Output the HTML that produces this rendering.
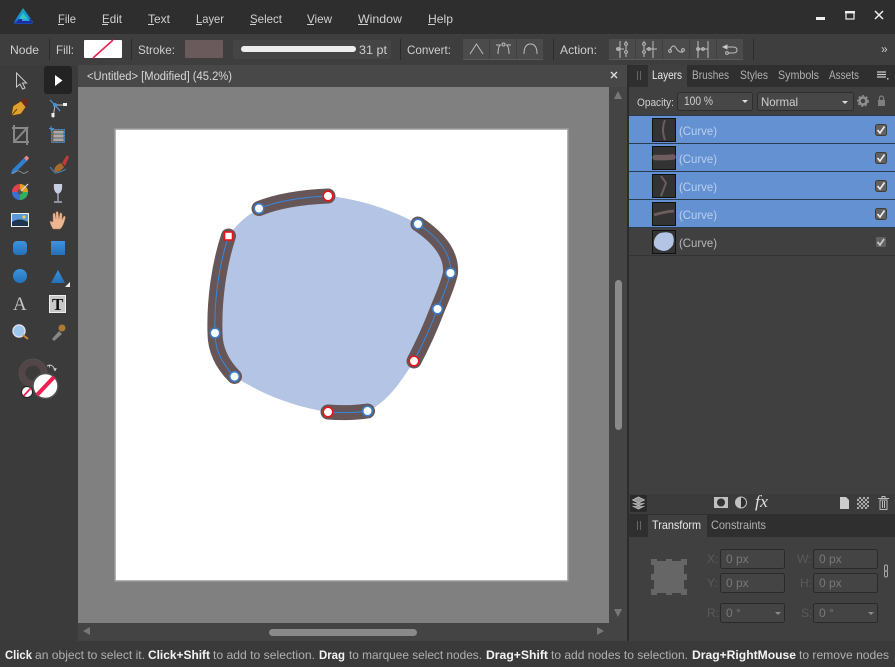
<!DOCTYPE html>
<html><head><meta charset="utf-8"><title>Affinity Designer</title>
<style>
html,body{margin:0;padding:0;background:#3b3b3b;width:895px;height:667px;overflow:hidden}
svg{display:block;font-family:"Liberation Sans",sans-serif;font-size:12px}
.m{fill:#d0d0d0}.l{fill:#cfcfcf}.d{fill:#5a5a5a}.i{fill:#787878}.b{fill:#f4f4f4;font-weight:bold}.g{fill:#b0b0b0}
.ic{fill:none;stroke:#bdbdbd;stroke-width:1}
</style></head><body>
<svg width="895" height="667" viewBox="0 0 895 667" xmlns="http://www.w3.org/2000/svg">
<defs>
<linearGradient id="bl" x1="0" y1="0" x2="0" y2="1"><stop offset="0" stop-color="#3d94de"/><stop offset="1" stop-color="#2470b8"/></linearGradient>
<linearGradient id="lg" x1="0" y1="0" x2="0" y2="1"><stop offset="0" stop-color="#16a8a8"/><stop offset=".6" stop-color="#1c8de0"/><stop offset="1" stop-color="#1c3fb0"/></linearGradient>
</defs>
<rect width="895" height="667" fill="#3b3b3b"/>
<!-- title bar -->
<rect width="895" height="34" fill="#2e2e2e"/>
<rect y="34" width="895" height="31" fill="#3e3e3e"/>
<path d="M23 8L33 22Q33 24 31 24H15Q13 24 14 22Z" fill="url(#lg)"/>
<path d="M23 13L28 19H19Z" fill="#2fd8b0" opacity=".8"/><path d="M19 19H31L32 23H16Z" fill="#1b2f9a"/><path d="M22 19H29L30 21H22Z" fill="#2a9ee8"/>
<g class="m">
<text x="58" y="23" textLength="18" lengthAdjust="spacingAndGlyphs">File</text><rect x="58" y="24" width="6" height="1"/>
<text x="102" y="23" textLength="20" lengthAdjust="spacingAndGlyphs">Edit</text><rect x="102" y="24" width="6" height="1"/>
<text x="148" y="23" textLength="22" lengthAdjust="spacingAndGlyphs">Text</text><rect x="148" y="24" width="6" height="1"/>
<text x="196" y="23" textLength="28" lengthAdjust="spacingAndGlyphs">Layer</text><rect x="196" y="24" width="6" height="1"/>
<text x="250" y="23" textLength="32" lengthAdjust="spacingAndGlyphs">Select</text><rect x="250" y="24" width="6" height="1"/>
<text x="307" y="23" textLength="25" lengthAdjust="spacingAndGlyphs">View</text><rect x="307" y="24" width="7" height="1"/>
<text x="358" y="23" textLength="44" lengthAdjust="spacingAndGlyphs">Window</text><rect x="358" y="24" width="10" height="1"/>
<text x="428" y="23" textLength="25" lengthAdjust="spacingAndGlyphs">Help</text><rect x="428" y="24" width="7" height="1"/>
</g>
<rect x="816" y="17" width="9" height="3" fill="#f0f0f0"/>
<rect x="846" y="12" width="8" height="7" fill="none" stroke="#eee" stroke-width="1.2"/><rect x="845" y="11" width="10" height="2.4" fill="#eee"/>
<path d="M875 11l8 8M883 11l-8 8" stroke="#eee" stroke-width="1.5"/>
<!-- toolbar -->
<g class="l">
<text x="10" y="54" textLength="29" lengthAdjust="spacingAndGlyphs">Node</text>
<text x="56" y="54" textLength="18" lengthAdjust="spacingAndGlyphs">Fill:</text>
<text x="138" y="54" textLength="37" lengthAdjust="spacingAndGlyphs">Stroke:</text>
<text x="407" y="54" textLength="44" lengthAdjust="spacingAndGlyphs">Convert:</text>
<text x="560" y="54" textLength="37" lengthAdjust="spacingAndGlyphs">Action:</text>
</g>
<g fill="#2b2b2b"><rect x="49" y="39" width="1" height="21"/><rect x="131" y="39" width="1" height="21"/><rect x="400" y="39" width="1" height="21"/><rect x="553" y="39" width="1" height="21"/><rect x="753" y="39" width="1" height="21"/></g>
<rect x="84" y="40" width="38" height="18" rx="1" fill="#fff"/><path d="M93 58L113 40" stroke="#f0204f" stroke-width="1.6"/>
<rect x="185" y="40" width="38" height="18" rx="1" fill="#6b5a5b"/>
<rect x="233" y="40" width="158" height="19" rx="2" fill="#454545"/>
<rect x="241" y="46" width="115" height="6" rx="3" fill="#eee"/>
<text x="359" y="54" class="l" textLength="28" lengthAdjust="spacingAndGlyphs">31 pt</text>
<!-- convert buttons -->
<g fill="#4b4b4b"><rect x="463" y="39" width="26" height="20"/><rect x="490" y="39" width="26" height="20"/><rect x="517" y="39" width="26" height="20"/>
<rect x="609" y="39" width="26" height="20"/><rect x="636" y="39" width="26" height="20"/><rect x="663" y="39" width="26" height="20"/><rect x="690" y="39" width="26" height="20"/><rect x="717" y="39" width="26" height="20"/></g>
<rect x="463" y="59" width="80" height="1" fill="#5a5a5a"/><rect x="609" y="59" width="134" height="1" fill="#5a5a5a"/>
<g class="ic">
<path d="M470 54L476.500 44L483 54"/>
<path d="M498 54Q498 47 500 45.500M509 54Q509 47 507 45.500M496 45H501M506 45H511"/><circle cx="503.500" cy="44.500" r="1.500"/>
<path d="M524 54Q524 44 530.500 44Q537 44 537 54"/>
<path d="M620 41V58M616 49H624M626 41V42.500M626 46V50M626 54V57"/><circle cx="626" cy="44" r="1.400"/><circle cx="626" cy="52" r="1.400"/><circle cx="618" cy="49" r="1.400"/>
<path d="M653 41V58M646 49H657M644 41V42.500M644 46V50M644 54V57"/><circle cx="644" cy="44" r="1.400"/><circle cx="644" cy="52" r="1.400"/><circle cx="649" cy="49" r="1.400"/>
<path d="M670 50Q673 43 676 48T683 52"/><circle cx="670" cy="51" r="1.400"/><circle cx="683" cy="50" r="1.400"/>
<path d="M698 41V58M708 41V58M698 49H708"/><circle cx="698" cy="49" r="1.400"/><circle cx="703" cy="49" r="1.400"/>
<path d="M726 47H733Q737 47 737 50Q737 53 733 53H728"/><path d="M723 47l4-2v4z" fill="#dcdcdc"/><circle cx="727" cy="53" r="1.400"/>
</g>
<text x="881" y="53" font-size="12" fill="#c8c8c8">»</text>
<!-- doc tab -->
<rect x="0" y="65" width="78" height="577" fill="#3b3b3b"/>
<rect x="78" y="65" width="549" height="22" fill="#484848"/>
<text x="87" y="80" fill="#d8d8d8" font-size="11.5" textLength="145" lengthAdjust="spacingAndGlyphs">&lt;Untitled&gt; [Modified] (45.2%)</text>
<path d="M611 72l6 6M617 72l-6 6" stroke="#ddd" stroke-width="1.4"/>
<!-- canvas -->
<rect x="78" y="87" width="531" height="536" fill="#808080"/>
<rect x="609" y="87" width="18" height="554" fill="#444"/>
<rect x="78" y="623" width="549" height="18" fill="#444"/>
<rect x="627" y="65" width="2" height="577" fill="#2c2c2c"/>
<rect x="115" y="129" width="453" height="452" fill="#fff" stroke="#9a9a9a" stroke-width="1.5"/>
<!-- scrollbars -->
<rect x="615" y="280" width="7" height="150" rx="3.500" fill="#8a8a8a"/>
<rect x="269" y="629" width="148" height="7" rx="3.500" fill="#8a8a8a"/>
<path d="M614 99h8l-4-8zM614 609h8l-4 8zM90 627v8l-7-4zM597 627v8l7-4z" fill="#777"/>
<!-- artwork -->
<path d="M328 196C360 199 392 210 418 224C436 236 452 252 450.500 273C448 285 442 298 437.500 309C431 326 423 344 414 361C402 380 388 402 367.500 411C354 415 341 415 328 412C295 407 263 395 234.500 376.500C222 364 215 350 215 333C214 300 219 265 228.500 236C236 225 246 216 259 208.500C280 200 305 197 328 196Z" fill="#b4c4e4"/>
<g fill="none" stroke="#675658" stroke-width="15" stroke-linecap="round">
<path d="M259 208.500C280 200 305 197 328 196"/>
<path d="M228.500 236C219 265 214 300 215 333C215 350 222 364 234.500 376.500"/>
<path d="M418 224C436 236 452 252 450.500 273C448 285 442 298 437.500 309C431 326 423 344 414 361"/>
<path d="M328 412C341 413 354 413 367.500 411"/>
</g>
<g fill="none" stroke="#3488e0" stroke-width="1">
<path d="M259 208.500C280 200 305 197 328 196"/>
<path d="M228.500 236C219 265 214 300 215 333C215 350 222 364 234.500 376.500"/>
<path d="M418 224C436 236 452 252 450.500 273C448 285 442 298 437.500 309C431 326 423 344 414 361"/>
<path d="M328 412C341 413 354 413 367.500 411"/>
</g>
<g fill="#fff" stroke="#3a7cc8" stroke-width="1.600">
<circle cx="259" cy="208.500" r="4.800"/><circle cx="215" cy="333" r="4.800"/><circle cx="234.500" cy="376.500" r="4.800"/>
<circle cx="418" cy="224" r="4.800"/><circle cx="450.500" cy="273" r="4.800"/><circle cx="437.500" cy="309" r="4.800"/><circle cx="367.500" cy="411" r="4.800"/>
</g>
<g fill="#fff" stroke="#e8141c" stroke-width="1.600">
<circle cx="328" cy="196" r="4.800"/><circle cx="414" cy="361" r="4.800"/><circle cx="328" cy="412" r="4.800"/>
<rect x="224.500" y="232" width="8" height="8"/>
</g>
<!-- tools -->
<rect x="44" y="66" width="28" height="28" rx="3" fill="#232323"/>
<path d="M16.500 73V87L20 84L22.500 89L25 88L22.500 83H26.500Z" fill="#3a3a3a" stroke="#c8c8c8" stroke-width="1"/>
<path d="M55 75V86L62.500 80.500Z" fill="#fff"/>
<!-- pen -->
<path d="M11 116L13 106L21 101L26 107L21 114Z" fill="#e0a030" stroke="#5a3a10" stroke-width=".7"/><path d="M21 101L25 98L29 100L26 107Z" fill="#6a2a20"/><path d="M11 116L17 109" stroke="#402a10" stroke-width=".8"/>
<!-- node tool -->
<path d="M50 100L55 105M55 105H66M55 105L53 118M55 105L60 111" stroke="#bbb" stroke-width="1"/><path d="M50 100l5 5M55 105l5 6" stroke="#3f93dc"/><circle cx="55" cy="105" r="2" fill="#3f93dc"/><rect x="63" y="103" width="4" height="3" fill="#eee"/><rect x="51.500" y="113" width="3" height="4" fill="#eee"/>
<!-- crop -->
<path d="M14 125V142H29M12 128H27V145M14 142L28 127" fill="none" stroke="#888" stroke-width="2"/>
<!-- artboard -->
<rect x="51.500" y="129.500" width="13" height="13" fill="#666" stroke="#3f93dc" stroke-width="1" stroke-dasharray="2 1"/><path d="M51 126v5M49 128.500h5" stroke="#3f93dc"/><rect x="53.500" y="131" width="10" height="10" fill="#aaa"/><path d="M53 134h11M53 138h11" stroke="#666"/>
<!-- pencil -->
<path d="M12 170L24 158L27 161L15 173L11 174Z" fill="#2f80d0"/><path d="M24 158l2.500-2.500 2.500 2.500-2 3z" fill="#e88"/><path d="M12 174Q18 169 21 172T28 171" fill="none" stroke="#99a" stroke-width=".8"/>
<!-- brush -->
<path d="M54 170Q56 164 61 163L64 167Q61 172 55 172Z" fill="#a56a30"/><path d="M62 163L67 155L69 157L65 166Z" fill="#c23a3a"/><path d="M50 167L55 173Q62 172 66 169" fill="none" stroke="#4488bb"/>
<!-- wheel -->
<circle cx="20" cy="192" r="8" fill="#7a50b0"/><path d="M20 192L12 192A8 8 0 0 1 20 184Z" fill="#e04050"/><path d="M20 192L20 184A8 8 0 0 1 28 192Z" fill="#e0a020"/><path d="M20 192L28 192A8 8 0 0 1 20 200Z" fill="#30b060"/><path d="M20 192L20 200A8 8 0 0 1 12 192Z" fill="#3a70d0"/><circle cx="20" cy="192" r="2.500" fill="#555"/><path d="M21 191L28 184" stroke="#ddd" stroke-width="1.200"/>
<!-- glass -->
<path d="M54 184H62Q63 192 58 194Q53 192 54 184Z" fill="#c8d0e0"/><path d="M58 194V201M54 202H62" stroke="#a8b0c0" stroke-width="1.400"/>
<!-- image -->
<rect x="11" y="213" width="18" height="14" fill="#f0f0f0"/><rect x="12" y="214" width="16" height="12" fill="#5b9ad6"/><path d="M12 222Q19 217 28 222V226H12Z" fill="#1f3550"/><circle cx="24" cy="217" r="1.500" fill="#ffd040"/>
<!-- hand -->
<path d="M53 229Q50 224 50 221L53 222L53 214Q54 212 55 214L56 219L56 212Q57 211 58 212L59 219L60 213Q61 212 62 214L62 220L64 216Q66 216 65 219Q63 227 60 229Z" fill="#eeb690" stroke="#a87a58" stroke-width=".5"/>
<!-- shapes -->
<rect x="13" y="241" width="14" height="14" rx="4" fill="url(#bl)"/>
<rect x="51" y="241" width="14" height="14" fill="url(#bl)"/>
<circle cx="20" cy="276" r="7" fill="url(#bl)"/>
<path d="M58 270L65 283H51Z" fill="url(#bl)"/><path d="M70 282V287H65Z" fill="#eee"/>
<text x="13" y="310" font-family="Liberation Serif" font-size="19" fill="#c4c4c4">A</text>
<rect x="49.500" y="295.500" width="16" height="17" fill="#c8c8c8" stroke="#eee"/>
<text x="52" y="310" font-family="Liberation Serif" font-size="17" font-weight="bold" fill="#111">T</text>
<circle cx="19" cy="331" r="6" fill="#9cc8ee" stroke="#dde" stroke-width="1.400"/><path d="M23 335L28 339" stroke="#d08a30" stroke-width="1.800"/>
<path d="M52 339L59 331L62 334L54 341Z" fill="#888"/><circle cx="62" cy="328" r="3.500" fill="#b07a30"/>
<!-- colour -->
<circle cx="33" cy="373" r="10.500" fill="none" stroke="#544648" stroke-width="6"/><circle cx="33" cy="373" r="14" fill="none" stroke="#555" stroke-width=".8"/>
<path d="M47 366Q53 363 55 371M47 366l2.500-1 0 2.500M55 371l1-2.500-2.500 .5" fill="none" stroke="#c8c8c8" stroke-width="1"/>
<circle cx="45.500" cy="386" r="12.500" fill="#fff" stroke="#505050" stroke-width="1.500"/><path d="M37 395L54 377" stroke="#ef2050" stroke-width="4"/>
<circle cx="27" cy="392" r="5.500" fill="#fff" stroke="#222" stroke-width="1"/><path d="M23.500 396L31 388" stroke="#ef2050" stroke-width="1.800"/>
<!-- right panel -->
<rect x="629" y="65" width="266" height="577" fill="#404040"/>
<rect x="629" y="65" width="266" height="22" fill="#2f2f2f"/>
<rect x="648" y="65" width="39" height="22" fill="#404040"/>
<g fill="#666"><rect x="637" y="71" width="1" height="9"/><rect x="640" y="71" width="1" height="9"/></g>
<text x="652" y="79" fill="#e8e8e8" textLength="30" lengthAdjust="spacingAndGlyphs">Layers</text>
<g class="g"><text x="692" y="79" textLength="37" lengthAdjust="spacingAndGlyphs">Brushes</text><text x="740" y="79" textLength="28" lengthAdjust="spacingAndGlyphs">Styles</text><text x="778" y="79" textLength="41" lengthAdjust="spacingAndGlyphs">Symbols</text><text x="829" y="79" textLength="30" lengthAdjust="spacingAndGlyphs">Assets</text></g>
<path d="M877 72h9M877 74.500h9M877 77h9" stroke="#ccc" stroke-width="1.200"/><rect x="887" y="78" width="1.500" height="1.500" fill="#ccc"/>
<text x="637" y="106" fill="#d0d0d0" font-size="11" textLength="37" lengthAdjust="spacingAndGlyphs">Opacity:</text>
<rect x="677.500" y="92.500" width="75" height="18" rx="2" fill="#474747" stroke="#2e2e2e"/>
<text x="684" y="105" class="l" textLength="29" lengthAdjust="spacingAndGlyphs">100 %</text><path d="M742 100h6l-3 3z" fill="#ddd"/>
<rect x="757.500" y="92.500" width="96" height="18" rx="2" fill="#474747" stroke="#2e2e2e"/>
<text x="761" y="106" class="l" textLength="37" lengthAdjust="spacingAndGlyphs">Normal</text><path d="M842 101h6l-3 3z" fill="#ddd"/>
<circle cx="863" cy="101" r="3.500" fill="none" stroke="#909090" stroke-width="2.500"/><circle cx="863" cy="101" r="5.300" fill="none" stroke="#909090" stroke-width="1.200" stroke-dasharray="2 2"/>
<rect x="878" y="100" width="7" height="6" fill="#808080"/><path d="M879.500 100v-2a2 2 0 0 1 4 0v2" fill="none" stroke="#808080" stroke-width="1.200"/>
<!-- layers -->
<rect x="629" y="115" width="266" height="113" fill="#2c3a50"/>
<g fill="#6491d1"><rect x="629" y="116" width="266" height="27"/><rect x="629" y="144" width="266" height="27"/><rect x="629" y="172" width="266" height="27"/><rect x="629" y="200" width="266" height="27"/></g>
<rect x="629" y="255" width="266" height="1" fill="#333"/>
<g fill="#333" stroke="#111"><rect x="652.500" y="118.500" width="23" height="23"/><rect x="652.500" y="146.500" width="23" height="23"/><rect x="652.500" y="174.500" width="23" height="23"/><rect x="652.500" y="202.500" width="23" height="23"/><rect x="652.500" y="230.500" width="23" height="23"/></g>
<path d="M665 120Q661 129 665 140" fill="none" stroke="#6e5c5e" stroke-width="2"/>
<path d="M655 157.500Q664 158 673 157" fill="none" stroke="#6e5c5e" stroke-width="5.500" stroke-linecap="round"/>
<path d="M661 176L666 183L661 196" fill="none" stroke="#6e5c5e" stroke-width="2"/>
<path d="M654 215Q663 212 674 211" fill="none" stroke="#6e5c5e" stroke-width="2.800"/>
<path d="M660 233Q668 231 672 234Q675 238 673 245Q669 251 664 251Q656 250 654 245Q653 237 660 233Z" fill="#b4c4e4"/>
<g fill="#b9d0ef"><text x="679" y="135" textLength="38" lengthAdjust="spacingAndGlyphs">(Curve)</text><text x="679" y="163" textLength="38" lengthAdjust="spacingAndGlyphs">(Curve)</text><text x="679" y="191" textLength="38" lengthAdjust="spacingAndGlyphs">(Curve)</text><text x="679" y="219" textLength="38" lengthAdjust="spacingAndGlyphs">(Curve)</text></g>
<text x="679" y="247" fill="#b8b8b8" textLength="38" lengthAdjust="spacingAndGlyphs">(Curve)</text>
<g fill="#626262" stroke="#3c3c3c"><rect x="875.500" y="124.500" width="11" height="11" rx="2"/><rect x="875.500" y="152.500" width="11" height="11" rx="2"/><rect x="875.500" y="180.500" width="11" height="11" rx="2"/><rect x="875.500" y="208.500" width="11" height="11" rx="2"/></g>
<rect x="876" y="237" width="10" height="10" rx="1.500" fill="#626262"/>
<g fill="none" stroke="#eee" stroke-width="1.600"><path d="M877.500 130l2.500 3 4.500-6.500M877.500 158l2.500 3 4.500-6.500M877.500 186l2.500 3 4.500-6.500M877.500 214l2.500 3 4.500-6.500"/><path d="M877.500 242l2.500 3 4-6" stroke="#ccc"/></g>
<!-- layer bottom icons -->
<rect x="629" y="494" width="266" height="20" fill="#3b3b3b"/>
<rect x="630" y="495" width="17" height="17" rx="1" fill="#2a2a2a"/>
<path d="M638.500 497l6 3-6 3-6-3zM632.500 503l6 3 6-3M632.500 506l6 3 6-3" fill="#999" stroke="#bbb" stroke-width=".8"/>
<rect x="714" y="497" width="14" height="11" fill="#c0c0c0"/><circle cx="721" cy="502.500" r="4" fill="#333"/>
<circle cx="741" cy="502.500" r="5.500" fill="#2e2e2e" stroke="#c0c0c0"/><path d="M741 497A5.500 5.500 0 0 0 741 508Z" fill="#c0c0c0"/>
<text x="755" y="507" font-family="Liberation Serif" font-style="italic" font-size="17" fill="#ddd" textLength="13" lengthAdjust="spacingAndGlyphs">fx</text>
<path d="M840 497H846L849 500V509H840Z" fill="#ccc"/>
<rect x="857" y="497" width="12" height="12" fill="#aaa"/><path d="M857 497h2v2h-2zM861 497h2v2h-2zM865 497h2v2h-2zM859 499h2v2h-2zM863 499h2v2h-2zM867 499h2v2h-2zM857 501h2v2h-2zM861 501h2v2h-2zM865 501h2v2h-2zM859 503h2v2h-2zM863 503h2v2h-2zM867 503h2v2h-2zM857 505h2v2h-2zM861 505h2v2h-2zM865 505h2v2h-2zM859 507h2v2h-2zM863 507h2v2h-2zM867 507h2v2h-2z" fill="#444"/>
<path d="M878 498.500h11M882 498v-1.500h3v1.500M880 500h7v9.500h-7z" fill="none" stroke="#bbb" stroke-width="1"/><path d="M882.500 501v7M884.500 501v7" stroke="#bbb"/>
<!-- transform -->
<rect x="629" y="514" width="266" height="23" fill="#2f2f2f"/>
<rect x="648" y="515" width="59" height="22" fill="#404040"/>
<g fill="#666"><rect x="637" y="521" width="1" height="9"/><rect x="640" y="521" width="1" height="9"/></g>
<text x="652" y="529" fill="#e8e8e8" textLength="49" lengthAdjust="spacingAndGlyphs">Transform</text>
<text x="711" y="529" class="g" textLength="55" lengthAdjust="spacingAndGlyphs">Constraints</text>
<rect x="654" y="561" width="30" height="32" fill="#666"/>
<g fill="#666"><rect x="651" y="559" width="6" height="6"/><rect x="666" y="559" width="6" height="6"/><rect x="681" y="559" width="6" height="6"/><rect x="651" y="574" width="6" height="6"/><rect x="681" y="574" width="6" height="6"/><rect x="651" y="589" width="6" height="6"/><rect x="666" y="589" width="6" height="6"/><rect x="681" y="589" width="6" height="6"/></g>
<g fill="#444" stroke="#2a2a2a"><rect x="720.500" y="549.500" width="64" height="19" rx="2"/><rect x="720.500" y="573.500" width="64" height="19" rx="2"/><rect x="720.500" y="603.500" width="64" height="19" rx="2"/><rect x="813.500" y="549.500" width="64" height="19" rx="2"/><rect x="813.500" y="573.500" width="64" height="19" rx="2"/><rect x="813.500" y="603.500" width="64" height="19" rx="2"/></g>
<g class="d"><text x="707" y="563">X:</text><text x="707" y="587">Y:</text><text x="707" y="617">R:</text><text x="797" y="563">W:</text><text x="800" y="587">H:</text><text x="801" y="617">S:</text></g>
<g class="i"><text x="726" y="563">0 px</text><text x="726" y="587">0 px</text><text x="726" y="617">0 °</text><text x="819" y="563">0 px</text><text x="819" y="587">0 px</text><text x="819" y="617">0 °</text></g>
<path d="M775 612h6l-3 3zM868 612h6l-3 3z" fill="#8a8a8a"/>
<rect x="884.500" y="565" width="3" height="6" rx="1.500" fill="none" stroke="#aaa" stroke-width="1"/><rect x="884.500" y="571" width="3" height="6" rx="1.500" fill="none" stroke="#aaa" stroke-width="1"/>
<!-- status -->
<rect y="641" width="895" height="26" fill="#3a3a3a"/>
<text x="5" y="659" class="b" textLength="27" lengthAdjust="spacingAndGlyphs">Click</text>
<text x="35" y="659" class="g" textLength="110" lengthAdjust="spacingAndGlyphs">an object to select it.</text>
<text x="148" y="659" class="b" textLength="62" lengthAdjust="spacingAndGlyphs">Click+Shift</text>
<text x="213" y="659" class="g" textLength="102" lengthAdjust="spacingAndGlyphs">to add to selection.</text>
<text x="319" y="659" class="b" textLength="26" lengthAdjust="spacingAndGlyphs">Drag</text>
<text x="349" y="659" class="g" textLength="133" lengthAdjust="spacingAndGlyphs">to marquee select nodes.</text>
<text x="486" y="659" class="b" textLength="62" lengthAdjust="spacingAndGlyphs">Drag+Shift</text>
<text x="551" y="659" class="g" textLength="137" lengthAdjust="spacingAndGlyphs">to add nodes to selection.</text>
<text x="692" y="659" class="b" textLength="104" lengthAdjust="spacingAndGlyphs">Drag+RightMouse</text>
<text x="799" y="659" class="g" textLength="90" lengthAdjust="spacingAndGlyphs">to remove nodes</text>
</svg>
</body></html>
